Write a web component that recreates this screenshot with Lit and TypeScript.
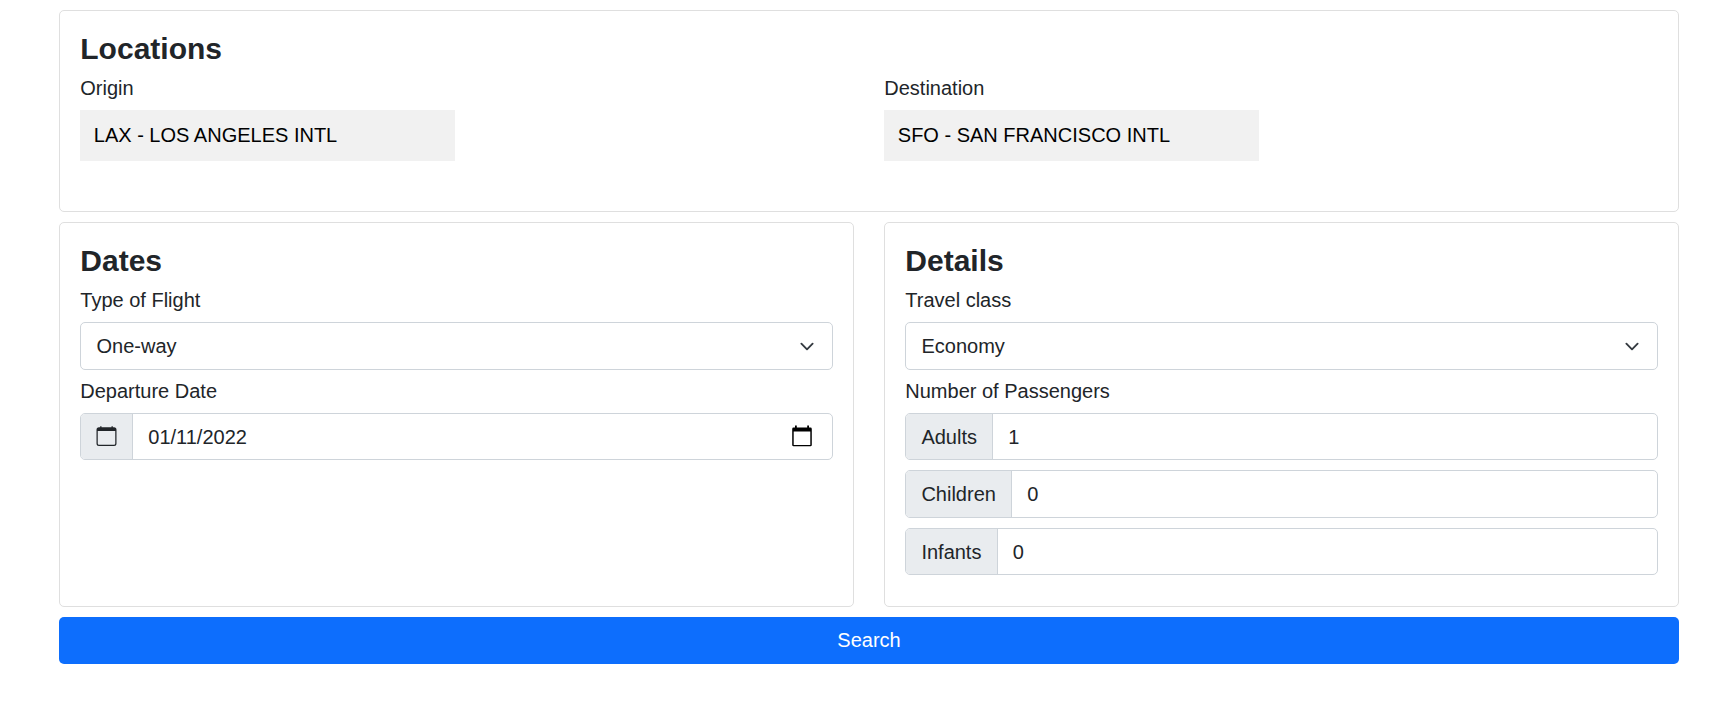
import { LitElement, html, css } from "lit";
import { customElement, property } from "lit/decorators.js";

const chevron = html`<svg width="20" height="15" viewBox="0 0 16 16" aria-hidden="true">
  <path fill="none" stroke="#343a40" stroke-linecap="round" stroke-linejoin="round" stroke-width="2" d="M2 5l6 6 6-6" />
</svg>`;

const calendar = html`<svg width="20.5" height="20" viewBox="0 0 16.4 16" fill="#212529" aria-hidden="true">
  <path transform="translate(.4 0)" d="M3.5 0a.5.5 0 0 1 .5.5V1h8V.5a.5.5 0 0 1 1 0V1h1a2 2 0 0 1 2 2v11a2 2 0 0 1-2 2H2a2 2 0 0 1-2-2V3a2 2 0 0 1 2-2h1V.5a.5.5 0 0 1 .5-.5zM1 4v10a1 1 0 0 0 1 1h12a1 1 0 0 0 1-1V4H1z" />
</svg>`;

const picker = html`<svg width="20" height="22" viewBox="0 0 20 22" aria-hidden="true">
  <path fill="#000" fill-rule="evenodd" d="M3 .5h1.800v2h10.400v-2H17v2h1.400q1.400 0 1.400 1.400v16q0 1.400-1.400 1.400H1.600Q.2 21.300.2 19.900V3.900Q.2 2.500 1.600 2.500H3zM1.700 6.500v13.400h16.600V6.500z" />
</svg>`;

@customElement("select-field")
export class SelectField extends LitElement {
  @property() value = "";

  static styles = css`
    :host {
      display: flex;
      align-items: center;
      justify-content: space-between;
      box-sizing: border-box;
      height: 47.5px;
      padding: 1px 15px 0 15.5px;
      border: 1px solid #ced4da;
      border-radius: 5px;
      background: #fff;
    }
  `;

  render() {
    return html`<span>${this.value}</span>${chevron}`;
  }
}

@customElement("input-group")
export class InputGroup extends LitElement {
  @property() label = "";
  @property() value = "";
  @property({ type: Boolean }) date = false;

  static styles = css`
    :host {
      display: flex;
      box-sizing: border-box;
      height: 47.5px;
      border: 1px solid #ced4da;
      border-radius: 5px;
      overflow: hidden;
      background: #fff;
    }
    .addon {
      display: flex;
      align-items: center;
      padding: 1px 15.2px 0 15.4px;
      background: #e9ecef;
      border-right: 1px solid #ced4da;
    }
    .value {
      display: flex;
      flex: 1;
      align-items: center;
      justify-content: space-between;
      padding: 1px 20.5px 0 15.2px;
    }
    svg {
      margin-bottom: 1.5px;
    }
  `;

  render() {
    return html`
      <div class="addon">${this.date ? calendar : this.label}</div>
      <div class="value"><span>${this.value}</span>${this.date ? picker : null}</div>
    `;
  }
}

@customElement("app-root")
export class AppRoot extends LitElement {
  static styles = css`
    :host {
      display: block;
      box-sizing: border-box;
      width: 1718px;
      min-height: 723px;
      padding: 10px 39px 0 59px;
      background: #fff;
      color: #212529;
      font: 20px/30px "Liberation Sans", Arial, sans-serif;
    }
    .form {
      display: flex;
      flex-direction: column;
      gap: 10px;
    }
    .card {
      box-sizing: border-box;
      padding: 20px;
      border: 1px solid #dfdfdf;
      border-radius: 5px;
    }
    .locations {
      height: 202px;
    }
    .pair {
      display: grid;
      grid-template-columns: 1fr 1fr;
      column-gap: 30px;
      height: 385px;
    }
    .places {
      display: grid;
      grid-template-columns: 804px 1fr;
    }
    h2 {
      margin: 0;
      padding-left: 0.3px;
      font-size: 30px;
      line-height: 36px;
      font-weight: 700;
    }
    .label {
      padding: 6px 0 7px 0.3px;
    }
    .place {
      box-sizing: border-box;
      width: 375px;
      height: 51px;
      padding: 9.5px 13.8px;
      background: #f1f1f1;
      color: #000;
    }
    .groups {
      display: flex;
      flex-direction: column;
      gap: 10px;
    }
    .search {
      height: 47px;
      padding: 0 0 2px;
      border: 0;
      border-radius: 5px;
      background: #0d6efd;
      color: #fff;
      font: inherit;
    }
  `;

  render() {
    return html`
      <main class="form">
        <section class="card locations">
          <h2>Locations</h2>
          <div class="places">
            <div>
              <div class="label">Origin</div>
              <div class="place">LAX - LOS ANGELES INTL</div>
            </div>
            <div>
              <div class="label">Destination</div>
              <div class="place">SFO - SAN FRANCISCO INTL</div>
            </div>
          </div>
        </section>
        <div class="pair">
          <section class="card">
            <h2>Dates</h2>
            <div class="label">Type of Flight</div>
            <select-field value="One-way"></select-field>
            <div class="label">Departure Date</div>
            <input-group date value="01/11/2022"></input-group>
          </section>
          <section class="card">
            <h2>Details</h2>
            <div class="label">Travel class</div>
            <select-field value="Economy"></select-field>
            <div class="label">Number of Passengers</div>
            <div class="groups">
              <input-group label="Adults" value="1"></input-group>
              <input-group label="Children" value="0"></input-group>
              <input-group label="Infants" value="0"></input-group>
            </div>
          </section>
        </div>
        <button class="search">Search</button>
      </main>
    `;
  }
}
